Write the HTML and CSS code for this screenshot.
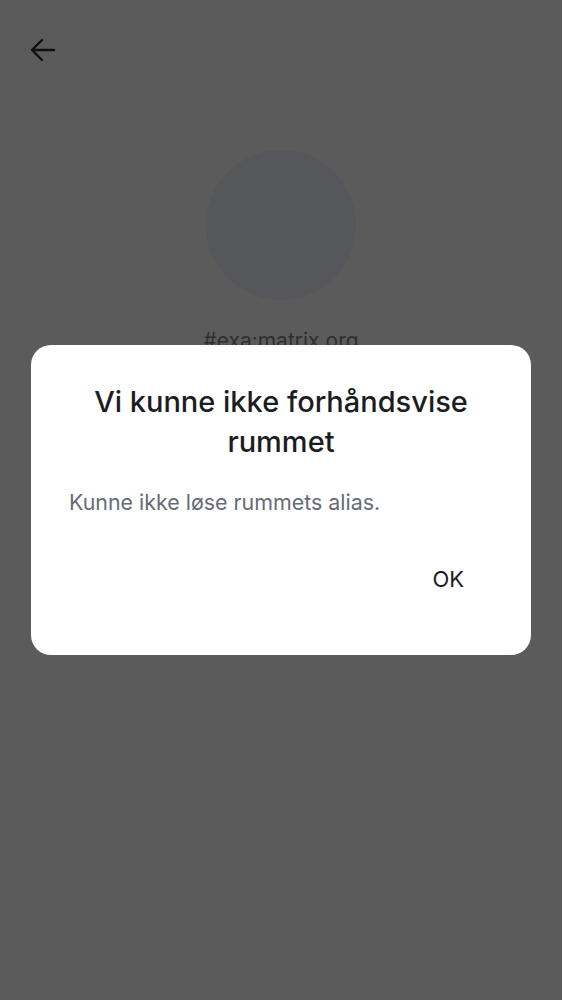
FILE: index.html
```html
<!DOCTYPE html>
<html lang="no">
<head>
<meta charset="utf-8">
<link rel="stylesheet" href="styles.css">
</head>
<body>
<div class="page">
  <header class="topbar">
    <button class="back" aria-label="Tilbake">
      <svg width="26" height="26" viewBox="0 0 26 26"><path d="M24 12H2M12 2L2 12l10 10" fill="none" stroke="#101010" stroke-width="2.4" stroke-linecap="round" stroke-linejoin="round"/></svg>
    </button>
  </header>
  <main class="room">
    <div class="avatar"></div>
    <div class="alias">#exa:matrix.org</div>
  </main>
</div>
<div class="scrim">
  <div class="dialog" role="alertdialog">
    <h1 class="title">Vi kunne ikke forhåndsvise rummet</h1>
    <p class="message">Kunne ikke løse rummets alias.</p>
    <div class="actions">
      <button class="ok">OK</button>
    </div>
  </div>
</div>
</body>
</html>
```
FILE: styles.css
```css
html, body {
  margin: 0;
  padding: 0;
}
body {
  width: 562px;
  height: 1000px;
  overflow: hidden;
  font-family: Inter, "Noto Sans", sans-serif;
  background: #5b5b5b;
  position: relative;
}
.page {
  height: 1000px;
  display: flex;
  flex-direction: column;
}
.topbar {
  height: 100px;
  display: flex;
  align-items: flex-start;
  padding: 38px 0 0 30px;
  box-sizing: border-box;
}
.back {
  border: 0;
  background: none;
  padding: 0;
  width: 26px;
  height: 26px;
  display: flex;
}
.room {
  display: flex;
  flex-direction: column;
  align-items: center;
  padding-top: 50px;
}
.avatar {
  width: 150px;
  height: 150px;
  border-radius: 50%;
  background: #55575a;
}
.alias {
  margin-top: 28px;
  font-size: 21px;
  color: #2f2f2f;
}
.scrim {
  position: absolute;
  inset: 0;
  display: flex;
  align-items: center;
  justify-content: center;
}
.dialog {
  width: 500px;
  height: 310px;
  box-sizing: border-box;
  background: #ffffff;
  border-radius: 20px;
  padding: 37px 38px 0 38px;
  display: flex;
  flex-direction: column;
}
.title {
  margin: 0;
  text-align: center;
  font-size: 29px;
  line-height: 40px;
  font-weight: 500;
  color: #1b1d22;
}
.message {
  margin: 26px 0 0 0;
  font-size: 21.4px;
  line-height: 28px;
  color: #656c76;
}
.actions {
  display: flex;
  justify-content: flex-end;
  margin-top: 48px;
}
.ok {
  border: 0;
  background: none;
  font-family: inherit;
  font-size: 22px;
  color: #1b1d22;
  padding: 0 29px 0 0;
  line-height: 30px;
}
```
